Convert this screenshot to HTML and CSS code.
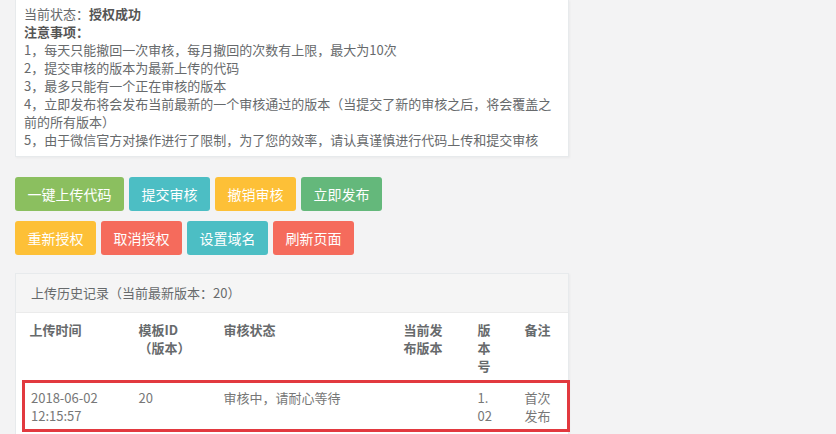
FILE: index.html
```html
<!DOCTYPE html>
<html lang="zh-CN">
<head>
<meta charset="utf-8">
<title>小程序代码管理</title>
<link rel="stylesheet" href="styles.css">
</head>
<body>
<div class="page">
  <div class="panel notice">
    <div class="line">当前状态：<b>授权成功</b></div>
    <div class="line"><b>注意事项：</b></div>
    <div class="line">1，每天只能撤回一次审核，每月撤回的次数有上限，最大为10次</div>
    <div class="line">2，提交审核的版本为最新上传的代码</div>
    <div class="line">3，最多只能有一个正在审核的版本</div>
    <div class="line">4，立即发布将会发布当前最新的一个审核通过的版本（当提交了新的审核之后，将会覆盖之前的所有版本）</div>
    <div class="line">5，由于微信官方对操作进行了限制，为了您的效率，请认真谨慎进行代码上传和提交审核</div>
  </div>

  <div class="btn-row">
    <button class="btn green">一键上传代码</button>
    <button class="btn teal">提交审核</button>
    <button class="btn yellow">撤销审核</button>
    <button class="btn green2">立即发布</button>
  </div>
  <div class="btn-row">
    <button class="btn yellow">重新授权</button>
    <button class="btn red">取消授权</button>
    <button class="btn teal">设置域名</button>
    <button class="btn red">刷新页面</button>
  </div>

  <div class="panel history">
    <div class="panel-head">上传历史记录（当前最新版本：20）</div>
    <div class="panel-body">
      <table class="table">
        <colgroup>
          <col class="c1"><col class="c2"><col class="c3"><col class="c4"><col class="c5"><col class="c6">
        </colgroup>
        <thead>
          <tr>
            <th>上传时间</th>
            <th>模板ID<br>（版本）</th>
            <th>审核状态</th>
            <th class="pub">当前发布版本</th>
            <th class="ver">版本号</th>
            <th class="note">备注</th>
          </tr>
        </thead>
        <tbody>
          <tr class="mark">
            <td>2018-06-02 12:15:57</td>
            <td>20</td>
            <td>审核中，请耐心等待</td>
            <td class="pub"></td>
            <td class="ver">1.02</td>
            <td class="note">首次发布</td>
          </tr>
        </tbody>
      </table>
    </div>
  </div>
</div>
</body>
</html>
```
FILE: styles.css
```css
html, body {
  margin: 0;
  padding: 0;
  background: #f3f3f4;
}
body {
  font-family: "Noto Sans CJK SC", "Liberation Sans", sans-serif;
  font-size: 13px;
  color: #676a6c;
}
.page {
  width: 554px;
  padding: 0 0 0 15px;
}
.panel {
  background: #fff;
  border: 1px solid #e7eaec;
  box-shadow: 1px 1px 2px rgba(0,0,0,0.04);
}
.notice {
  border-top: none;
  padding: 5px 8px 7px 8px;
}
.line {
  line-height: 18px;
}
.notice b {
  color: #555;
  font-weight: bold;
}
.btn-row {
  display: flex;
  gap: 5px;
  margin-top: 10px;
}
.notice + .btn-row {
  margin-top: 20px;
}
.btn {
  height: 34px;
  padding: 0 12.5px;
  border: none;
  border-radius: 3px;
  color: #fff;
  font-family: "Noto Sans CJK SC", "Liberation Sans", sans-serif;
  font-size: 14px;
  line-height: 34px;
  cursor: pointer;
}
.green { background: #8bbf5f; }
.teal { background: #4cbec4; }
.yellow { background: #fdc037; }
.green2 { background: #64b87b; }
.red { background: #f56b5c; }

.history {
  margin-top: 18px;
}
.panel-head {
  background: #f5f5f5;
  border-bottom: 1px solid #ebebeb;
  height: 38px;
  line-height: 38px;
  padding-left: 15px;
  color: #676a6c;
}
.panel-body {
  padding: 0 1px 20px 6px;
}
.table {
  width: 545px;
  table-layout: fixed;
  border-collapse: collapse;
}
.c1 { width: 109px; }
.c2 { width: 85px; }
.c3 { width: 180px; }
.c4 { width: 74px; }
.c5 { width: 47px; }
.c6 { width: 50px; }
.table th, .table td {
  text-align: left;
  vertical-align: top;
  line-height: 18px;
  padding: 8px 8px 5px 6px;
}
.table th {
  font-weight: bold;
  color: #676a6c;
}
.table td {
  color: #777;
  line-height: 17.5px;
}
.table .pub { padding-right: 18px; }
.table .ver { padding-right: 25px; word-break: break-all; }
.table .note { padding-right: 9px; }
.mark {
  border: 3px solid #e2393f;
}
.mark td {
  padding-top: 6px;
  padding-bottom: 5px;
}
```
